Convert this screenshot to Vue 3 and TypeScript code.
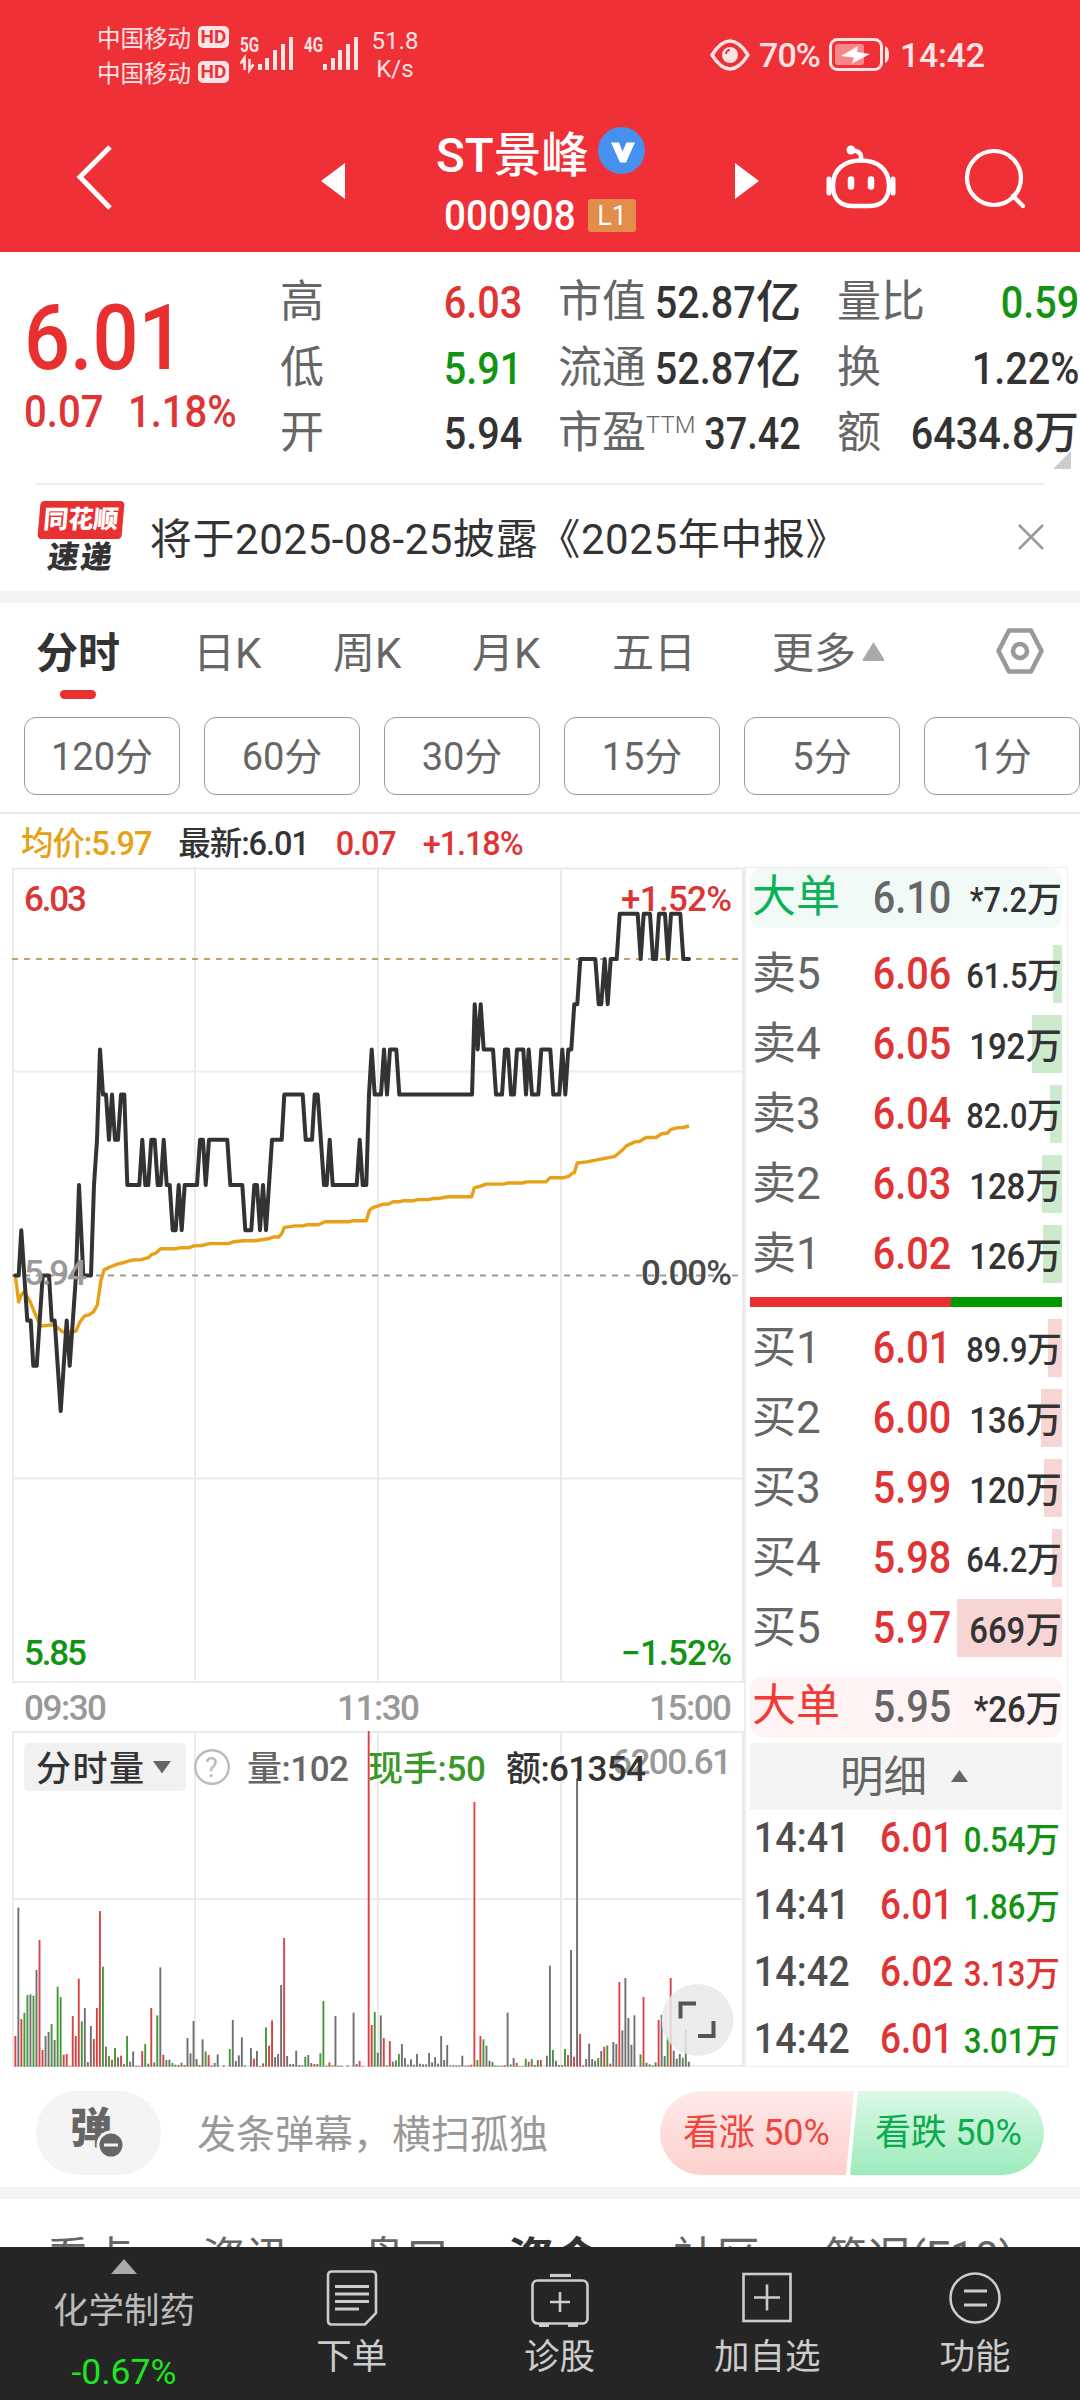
<script setup lang="ts">
type Quote = { k: string; sup?: string; v: string; u?: string; c: string }
type Level = { k: string; p: string; v: string; w: number }
type Point = [number, number]

const left: Quote[] = [
  { k: '高', v: '6.03', c: 'red' },
  { k: '低', v: '5.91', c: 'green' },
  { k: '开', v: '5.94', c: 'dark' },
]
const middle: Quote[] = [
  { k: '市值', v: '52.87', u: '亿', c: 'dark' },
  { k: '流通', v: '52.87', u: '亿', c: 'dark' },
  { k: '市盈', sup: 'TTM', v: '37.42', c: 'dark small' },
]
const right: Quote[] = [
  { k: '量比', v: '0.59', c: 'green' },
  { k: '换', v: '1.22%', c: 'dark' },
  { k: '额', v: '6434.8', u: '万', c: 'dark' },
]
const periods = ['120分', '60分', '30分', '15分', '5分', '1分']
const sells: Level[] = [
  { k: '卖5', p: '6.06', v: '61.5', w: 9 },
  { k: '卖4', p: '6.05', v: '192', w: 30 },
  { k: '卖3', p: '6.04', v: '82.0', w: 12 },
  { k: '卖2', p: '6.03', v: '128', w: 20 },
  { k: '卖1', p: '6.02', v: '126', w: 19 },
]
const buys: Level[] = [
  { k: '买1', p: '6.01', v: '89.9', w: 14 },
  { k: '买2', p: '6.00', v: '136', w: 21 },
  { k: '买3', p: '5.99', v: '120', w: 18 },
  { k: '买4', p: '5.98', v: '64.2', w: 10 },
  { k: '买5', p: '5.97', v: '669', w: 105 },
]
const ticks = [
  { t: '14:41', p: '6.01', v: '0.54', c: 'green' },
  { t: '14:41', p: '6.01', v: '1.86', c: 'green' },
  { t: '14:42', p: '6.02', v: '3.13', c: 'red' },
  { t: '14:42', p: '6.01', v: '3.01', c: 'green' },
]
const isWhole = (v: string) => !v.includes('.')

// Price series: horizontal position in thirds of a pixel, then cents above the previous close.
const price: Point[] = [
  [46, 0], [56, 0], [64, 1], [82, -1], [92, -1], [100, -2], [110, -2], [128, 0], [147, 0], [155, -1], [164, -1],
  [182, -3], [200, -1], [209, -2], [228, 0], [237, 2], [250, 0], [273, 0], [282, 2], [291, 3], [300, 5], [309, 4],
  [318, 4], [327, 3], [336, 4], [345, 3], [354, 3], [363, 4], [373, 4], [382, 2], [418, 2], [427, 3], [436, 2],
  [445, 2], [454, 3], [464, 3], [473, 2], [482, 2], [491, 3], [500, 2], [509, 2], [518, 1], [527, 1], [536, 2],
  [545, 1], [554, 2], [591, 2], [600, 3], [609, 3], [617, 2], [627, 3], [682, 3], [691, 2], [727, 2], [736, 1],
  [754, 1], [763, 2], [771, 2], [780, 1], [789, 2], [798, 1], [816, 3], [845, 3], [853, 4], [908, 4], [917, 3],
  [936, 3], [944, 4], [953, 4], [972, 2], [980, 2], [989, 3], [998, 2], [1070, 2], [1079, 3], [1088, 2], [1099, 2],
  [1107, 4], [1115, 5], [1124, 4], [1143, 4], [1152, 5], [1161, 4], [1170, 5], [1189, 5], [1198, 4], [1416, 4],
  [1424, 6], [1433, 5], [1442, 6], [1451, 5], [1479, 5], [1488, 4], [1506, 4], [1515, 5], [1524, 5], [1533, 4],
  [1542, 4], [1551, 5], [1570, 5], [1578, 4], [1586, 5], [1596, 4], [1615, 4], [1624, 5], [1651, 5], [1660, 4],
  [1678, 4], [1687, 5], [1696, 4], [1705, 5], [1714, 5], [1723, 6], [1732, 6], [1741, 7], [1786, 7], [1796, 6],
  [1804, 6], [1814, 7], [1823, 6], [1832, 7], [1850, 7], [1859, 8], [1913, 8], [1922, 7], [1931, 8], [1950, 8],
  [1959, 7], [1968, 7], [1977, 8], [1995, 8], [2004, 7], [2013, 8], [2041, 8], [2050, 7], [2067, 7],
]
const average: Point[] = [
  [46, 1123], [56, 1195], [64, 1175], [73, 1167], [82, 1180], [91, 1195], [100, 1215], [112, 1240], [122, 1260],
  [150, 1257], [164, 1256], [175, 1266], [190, 1276], [210, 1276], [228, 1273], [240, 1248], [254, 1232],
  [266, 1230], [280, 1222], [292, 1203], [302, 1140], [312, 1108], [330, 1100], [350, 1093], [372, 1088],
  [382, 1085], [400, 1081], [420, 1081], [445, 1075], [455, 1066], [467, 1063], [482, 1051], [527, 1051],
  [540, 1048], [568, 1048], [582, 1043], [604, 1042], [630, 1037], [684, 1037], [700, 1032], [730, 1029],
  [765, 1029], [805, 1024], [820, 1019], [836, 1019], [845, 1010], [853, 993], [872, 991], [885, 989], [908, 989],
  [920, 986], [955, 986], [975, 978], [1045, 978], [1060, 975], [1099, 975], [1108, 948], [1117, 940],
  [1150, 930], [1165, 930], [1180, 924], [1198, 924], [1210, 921], [1240, 921], [1255, 918], [1285, 918],
  [1300, 915], [1315, 915], [1345, 910], [1415, 910], [1423, 886], [1440, 882], [1458, 876], [1510, 876],
  [1525, 873], [1568, 873], [1580, 870], [1638, 870], [1650, 859], [1688, 859], [1706, 855], [1715, 848],
  [1723, 845], [1732, 819], [1760, 816], [1845, 801], [1866, 785], [1880, 772], [1905, 762], [1918, 761],
  [1938, 750], [1968, 750], [1985, 740], [2003, 738], [2013, 728], [2030, 724], [2048, 723], [2067, 719],
]
const priceLine = price.map(([x, n]) => `${(x / 3).toFixed(1)},${(1275.4 - n * 45.2).toFixed(1)}`).join(' ')
const averageLine = average.map(([x, y]) => `${(x / 3).toFixed(1)},${(860 + y / 2.703).toFixed(1)}`).join(' ')

// One entry per minute: bar height in thirds of a pixel and its colour; 0 leaves the minute empty.
const volumeData =
  '92r 477k 143r 162g 215g 217k 213g 290k 380r 50r 92k 104k 128g 80k 240g 209g 36r 38r 3g 152r 92r 264r 136g 176k 14k 122k 83r 176r 467r 300g ' +
  '60k 32g 21r 56g 28k 33r 8k 92g 15k 46k 3k 3k 47r 68g 9k 176r 13k 154g 298k 36r 20g 21k 11g 6k 5r 12g 5r 86k 40k 137k ' +
  '23k 5r 82k 46g 35r 4k 11k 37k 0k 4k 0k 53g 140k 17k 34k 88k 4g 0k 56k 24r 47k 2g 10r 118g 63r 139r 29k 38k 245k 386r ' +
  '32k 8k 8k 48k 5k 4k 30g 35k 11k 8r 8k 40g 197g 3k 13r 4g 152k 3k 3k 0k 4k 0k 162k 8k 17r 2g 0k 1007r 125r 164g 42k ' +
  '154k 86r 4g 77r 15k 19k 38g 68k 26k 6k 22k 6k 38k 9k 7k 7k 41k 13k 29k 9k 92k 20k 65k 4k 4k 4k 4k 33k 3k 4k ' +
  '6r 794r 20g 92r 82g 63k 18k 14k 4g 3k 3k 5r 162k 7g 26k 12r 2k 2k 24g 15r 23g 5k 20k 20r 0k 33k 303k 50g 18k 5k ' +
  '5g 53g 35r 350k 30r 865k 98r 4k 23k 69k 23k 18k 26g 47k 60r 64g 9r 74k 68k 254r 109k 266k 146k 66k 154k 0k 37g 209r 12k 7k ' +
  '4g 13k 140r 156k 32k 90g 266r 48k 24k 38k 27g 112k 15k'
const tones: Record<string, string> = { r: '#d84444', g: '#45983a', k: '#707070' }
const volumes = volumeData.split(' ').map((s, i) => ({
  x: 14.4 + i * 3.02,
  h: parseInt(s) / 3,
  fill: tones[s.slice(-1)],
}))
</script>

<template>
  <div class="app">
    <header class="top">
      <div class="status">
        <div class="carriers">
          <div class="carrier">中国移动<b>HD</b></div>
          <div class="carrier">中国移动<b>HD</b></div>
        </div>
        <svg class="signals" width="122" height="40" viewBox="0 0 122 40" fill="#fde4e5">
          <text x="0" y="17" font-size="21" font-weight="700" textLength="19" lengthAdjust="spacingAndGlyphs">5G</text>
          <path d="M4.500 35V23L.5 28.500M9.500 24v11l4-5.500" stroke="#fde4e5" stroke-width="2.600" fill="none" />
          <path d="M18 29h4v6h-4zM25 23h4v12h-4zM33 15h4v20h-4zM41 9h4v26h-4zM49 2h4v33h-4z" />
          <text x="64" y="17" font-size="21" font-weight="700" textLength="19" lengthAdjust="spacingAndGlyphs">4G</text>
          <path d="M83 29h4v6h-4zM91 23h4v12h-4zM98 15h4v20h-4zM106 9h4v26h-4zM114 2h4v33h-4z" />
        </svg>
        <div class="speed"><span>51.8</span><span>K/s</span></div>
        <svg class="eye" width="40" height="32" viewBox="0 0 40 32" fill="none" stroke="#fde4e5">
          <path d="M2 16C9 5 15 2 20 2s11 3 18 14C31 27 25 30 20 30S9 27 2 16z" stroke-width="3.4" stroke-linejoin="round" />
          <circle cx="20" cy="16" r="8" fill="#fde4e5" stroke="none" />
          <path d="M16 15a4 4 0 0 1 4-4" stroke="#f03037" stroke-width="2" />
        </svg>
        <span class="pct">70%</span>
        <svg class="battery" width="62" height="33" viewBox="0 0 62 33">
          <rect x="1.5" y="1.5" width="51" height="30" rx="7" fill="none" stroke="#fde4e5" stroke-width="3" />
          <rect x="6" y="6" width="29" height="21" rx="3" fill="#f8878b" />
          <path d="M56 8q4 1 4 8.500t-4 8.500z" fill="#fde4e5" />
          <path d="M29 8 12 18l13 1.500-2 6L41 16l-13-2z" fill="#fff" />
        </svg>
        <span class="clock">14:42</span>
      </div>
      <div class="bar">
        <svg class="back" width="40" height="68" viewBox="0 0 40 68"><path d="M35 4 5 34l30 31" fill="none" stroke="#fff" stroke-width="5" /></svg>
        <svg class="prev" width="24" height="36" viewBox="0 0 24 36"><path d="M24 0v36L0 18z" fill="#fff" /></svg>
        <div class="title">
          <div class="name">
            <span>ST景峰</span>
            <svg width="47" height="47" viewBox="0 0 47 47">
              <circle cx="23.500" cy="23.500" r="23.500" fill="#4690ee" />
              <path d="M13 15.500h8l3.500 9 4-9h8.500l-9 20h-6z" fill="#fff" />
            </svg>
          </div>
          <div class="code"><span class="digits">000908</span><i>L1</i></div>
        </div>
        <svg class="next" width="24" height="36" viewBox="0 0 24 36"><path d="M0 0v36l24-18z" fill="#fff" /></svg>
        <svg class="robot" width="72" height="66" viewBox="0 0 72 66" fill="none" stroke="#fff">
          <path d="M36 17V12q-1-5-9-6" stroke-width="4.500" />
          <circle cx="26" cy="6" r="4.500" fill="#fff" stroke="none" />
          <path d="M36 16.500c17 0 28 9 28 25 0 13-7 20.500-20 20.500H28C15 62 8 54.500 8 41.500c0-16 11-25 28-25z" stroke-width="4.500" />
          <path d="M4 35v14M68 35v14" stroke-width="5" stroke-linecap="round" />
          <path d="M26 35.500v7M46 35.500v7" stroke-width="6.500" stroke-linecap="round" />
        </svg>
        <svg class="search" width="64" height="64" viewBox="0 0 64 64" fill="none" stroke="#fff" stroke-width="4.200">
          <circle cx="30" cy="31" r="27" />
          <path d="m49 49 10 10" stroke-linecap="round" />
        </svg>
      </div>
    </header>

    <section class="quote">
      <div class="last">
        <div class="big">6.01</div>
        <div class="chg"><span>0.07</span><span>1.18%</span></div>
      </div>
      <div v-for="(col, ci) in [left, middle, right]" :key="ci" class="col" :class="'col' + ci">
        <div v-for="q in col" :key="q.k" class="pair">
          <span class="key">{{ q.k }}<sup v-if="q.sup">{{ q.sup }}</sup></span>
          <span class="val" :class="q.c"><span class="n">{{ q.v }}</span>{{ q.u }}</span>
        </div>
      </div>
      <svg class="fold" width="18" height="18" viewBox="0 0 18 18"><path d="M18 0v18H0z" fill="#ccc" /></svg>
    </section>

    <section class="news">
      <div class="logo"><b>同花顺</b><i>速递</i></div>
      <p>将于2025-08-25披露《2025年中报》</p>
      <svg width="26" height="26" viewBox="0 0 26 26"><path d="m1 1 24 24M25 1 1 25" stroke="#999" stroke-width="2.500" /></svg>
    </section>

    <nav class="tabs">
      <span class="t1 on">分时</span>
      <span class="t2">日K</span>
      <span class="t3">周K</span>
      <span class="t4">月K</span>
      <span class="t5">五日</span>
      <span class="t6">更多<svg width="23" height="19" viewBox="0 0 23 19"><path d="M11.500 0 22 17q1 2-1 2H2q-2 0-1-2z" fill="#aaa" /></svg></span>
      <svg class="hex" width="50" height="48" viewBox="0 0 50 48" fill="none" stroke="#999">
        <path d="M14 3.500h22L46.500 24 36 44.500H14L3.500 24z" stroke-width="4.500" stroke-linejoin="round" />
        <circle cx="25" cy="24" r="7" stroke-width="4.500" />
      </svg>
    </nav>
    <div class="periods"><span v-for="p in periods" :key="p">{{ p }}</span></div>

    <div class="legend">
      <span class="gold">均价:5.97</span><span class="dark">最新:6.01</span><span class="red">0.07</span><span class="red">+1.18%</span>
    </div>

    <section class="market">
      <svg class="chart" width="744" height="1201" viewBox="0 867 744 1201">
        <g stroke="#ebebeb" stroke-width="2" fill="none">
          <path d="M13 868.500H743V1682H13zM195 868.500V1682M378 868.500V1682M561 868.500V1682M13 1071.500H743M13 1478.500H743" />
          <path d="M13 1732H743V2066H13zM195 1732V2066M378 1732V2066M561 1732V2066M13 1899H743" />
        </g>
        <path d="M12 959H742" stroke="#c2a06a" stroke-width="1.800" stroke-dasharray="6 6" />
        <path d="M12 1275.500H742" stroke="#999" stroke-width="1.800" stroke-dasharray="6 6" />
        <polyline :points="averageLine" fill="none" stroke="#e6a117" stroke-width="3.400" stroke-linejoin="round" />
        <polyline :points="priceLine" fill="none" stroke="#333" stroke-width="4" stroke-linejoin="round" stroke-linecap="round" />
        <g class="lbl">
          <text x="24" y="1285" fill="#999" textLength="63">5.94</text>
          <text x="641" y="1285" fill="#4a4a4a" textLength="91">0.00%</text>
          <text x="24" y="911" fill="#dc3535" textLength="63">6.03</text>
          <text x="621" y="911" fill="#dc3535" textLength="111">+1.52%</text>
          <text x="24" y="1665" fill="#129312" textLength="63">5.85</text>
          <text x="621" y="1665" fill="#129312" textLength="111">−1.52%</text>
          <g fill="#999">
            <text x="24" y="1720" textLength="83">09:30</text>
            <text x="337" y="1720" textLength="83">11:30</text>
            <text x="649" y="1720" textLength="83">15:00</text>
            <text x="612" y="1774" textLength="120">6200.61</text>
          </g>
        </g>
        <rect x="24" y="1743" width="162" height="48" rx="5" fill="#f1f1f1" />
        <path d="M153 1761h18l-9 12.500z" fill="#666" />
        <circle cx="212" cy="1767" r="16.800" fill="none" stroke="#bbb" stroke-width="2.400" />
        <text x="205" y="1776.500" font-size="27" fill="#bbb">?</text>
        <rect v-for="(b, i) in volumes" :key="i" :x="b.x" :y="2066.700 - b.h" width="1.900" :height="b.h" :fill="b.fill" />
        <g class="lbl">
          <text x="36" y="1780.500" fill="#333" textLength="108">分时量</text>
          <text x="247" y="1780.500" fill="#666" textLength="102">量:102</text>
          <text x="368" y="1780.500" fill="#3a972a" textLength="118">现手:50</text>
          <text x="506" y="1780.500" fill="#333" textLength="140">额:61354</text>
        </g>
        <circle cx="697.500" cy="2020" r="36" fill="#e9e9e9" fill-opacity=".85" />
        <path d="M680.500 2018.500v-15h15.500M713.500 2021v15h-15.500" fill="none" stroke="#555" stroke-width="4" />
      </svg>

      <div class="book">
        <div class="big-order sell"><span class="key">大单</span><span class="p"><span class="n">6.10</span></span><span class="v"><span class="n">*7.2</span>万</span></div>
        <div class="rows">
          <div v-for="r in sells" :key="r.k" class="level">
            <i class="green-bg" :style="{ width: r.w + 'px' }"></i>
            <span class="key">{{ r.k }}</span><span class="p"><span class="n">{{ r.p }}</span></span><span class="v" :class="{ whole: isWhole(r.v) }"><span class="n">{{ r.v }}</span>万</span>
          </div>
        </div>
        <div class="ratio"><i></i></div>
        <div class="rows">
          <div v-for="r in buys" :key="r.k" class="level">
            <i class="red-bg" :style="{ width: r.w + 'px' }"></i>
            <span class="key">{{ r.k }}</span><span class="p"><span class="n">{{ r.p }}</span></span><span class="v" :class="{ whole: isWhole(r.v) }"><span class="n">{{ r.v }}</span>万</span>
          </div>
        </div>
        <div class="big-order buy"><span class="key">大单</span><span class="p"><span class="n">5.95</span></span><span class="v whole"><span class="n">*26</span>万</span></div>
        <div class="detail">明细<svg width="17" height="12" viewBox="0 0 17 12"><path d="M8.500 0 17 12H0z" fill="#666" /></svg></div>
        <div class="ticks">
          <div v-for="(t, i) in ticks" :key="i" class="tick">
            <span class="time">{{ t.t }}</span><span class="p"><span class="n">{{ t.p }}</span></span><span class="v" :class="t.c"><span class="n">{{ t.v }}</span>万</span>
          </div>
        </div>
      </div>
    </section>

    <section class="danmu">
      <div class="toggle">
        弹
        <svg width="30" height="30" viewBox="0 0 30 30"><circle cx="15" cy="15" r="13" fill="#666" stroke="#f4f4f4" stroke-width="3" /><path d="M8 15h14" stroke="#f4f4f4" stroke-width="3" /></svg>
      </div>
      <span class="hint">发条弹幕，横扫孤独</span>
      <div class="votes"><span class="up">看涨 50%</span><span class="down">看跌 50%</span></div>
    </section>

    <nav class="sections">
      <span class="s1">看点</span><span class="s2">资讯</span><span class="s3">盘口</span><span class="s4">资金</span><span class="s5">社区</span><span class="s6">简况(F10)</span>
    </nav>

    <footer class="dock">
      <div class="sector">
        <svg width="26" height="15" viewBox="0 0 26 15"><path d="M13 0 26 15H0z" fill="#aaa" /></svg>
        <span>化学制药</span>
        <b>-0.67%</b>
      </div>
      <div class="item">
        <svg width="60" height="58" viewBox="0 0 60 58" fill="none" stroke="#ccc" stroke-width="2.600">
          <path d="M10 2.500h40q4 0 4 4V44L43 55.500H10q-4 0-4-4v-45q0-4 4-4z" />
          <path d="M13 17.500h34M13 25h34M13 32.500h34M13 40h24" stroke-width="3" />
        </svg>
        <span>下单</span>
      </div>
      <div class="item">
        <svg width="60" height="58" viewBox="0 0 60 58" fill="none" stroke="#ccc" stroke-width="2.600">
          <rect x="2.500" y="11.500" width="55" height="43" rx="5" />
          <path d="M20 6.500h21" stroke-width="3.200" /><path d="M9 56.500h10M38 56.500h10" stroke-width="3.200" />
          <path d="M20 33h20M30 23v20" />
        </svg>
        <span>诊股</span>
      </div>
      <div class="item">
        <svg width="60" height="58" viewBox="0 0 60 58" fill="none" stroke="#ccc" stroke-width="2.600">
          <rect x="6.500" y="5" width="47" height="47" />
          <path d="M17 28.500h26M30 15.500v26" />
        </svg>
        <span>加自选</span>
      </div>
      <div class="item">
        <svg width="60" height="58" viewBox="0 0 60 58" fill="none" stroke="#ccc" stroke-width="2.600">
          <circle cx="30" cy="29" r="24.500" />
          <path d="M19 22h23M19 36h23" stroke-width="3" />
        </svg>
        <span>功能</span>
      </div>
    </footer>
  </div>
</template>

<style>
body {
  background: #fff;
}
</style>

<style scoped>
.app {
  width: 1080px;
  height: 2400px;
  overflow: hidden;
  display: flex;
  flex-direction: column;
  background: #fff;
  color: #333;
  font-family: Roboto, 'Noto Sans CJK SC', sans-serif;
}
.app > * {
  flex: none;
}
svg {
  display: block;
  flex: none;
}
i {
  font-style: normal;
}
.red { color: #e03434; }
.green { color: #129312; }
.dark { color: #333; }
.gold { color: #e6a117; }
.n {
  display: inline-block;
  transform: scaleX(0.88);
  transform-origin: right;
}

/* header */
.top {
  height: 252px;
  background: #f03037;
  color: #fde4e5;
}
.status {
  display: flex;
  height: 110px;
  box-sizing: border-box;
  padding: 19px 0 0 97px;
}
.carriers {
  width: 143px;
}
.carrier {
  display: flex;
  align-items: center;
  height: 35px;
  font-size: 23.5px;
}
.carrier b {
  width: 31px;
  margin-left: 7px;
  border-radius: 5px;
  background: #fde4e5;
  color: #f03037;
  font-size: 19px;
  line-height: 22px;
  text-align: center;
}
.signals {
  margin-top: 16px;
}
.speed {
  display: flex;
  flex-direction: column;
  width: 66px;
  align-items: center;
  font-size: 24px;
  line-height: 28px;
  padding-top: 8px;
}
.eye {
  margin: 20px 0 0 282px;
}
.pct,
.clock {
  margin-top: 16px;
  font-size: 34px;
  font-weight: 500;
  line-height: 40px;
}
.pct {
  width: 70px;
  padding-left: 9px;
  letter-spacing: -0.9px;
}
.battery {
  margin-top: 19px;
}
.clock {
  margin-left: 9px;
  letter-spacing: -0.3px;
}
.bar {
  display: flex;
  height: 142px;
}
.back { margin: 33px 0 0 75px; }
.prev { margin: 53px 0 0 206px; }
.title {
  display: flex;
  flex-direction: column;
  width: 216px;
  margin: 0 0 0 90px;
  padding-top: 11px;
  color: #fff;
}
.name {
  display: flex;
  align-items: center;
  gap: 9px;
  height: 60px;
  padding-left: 1px;
  font-size: 47.5px;
  font-weight: 500;
  white-space: nowrap;
}
.name svg { margin-top: -2px; }
.code {
  display: flex;
  align-items: center;
  height: 68px;
  padding-left: 9px;
  font-size: 42px;
  font-weight: 500;
}
.digits {
  width: 144px;
  transform: scaleX(0.92);
  transform-origin: left;
}
.code i {
  width: 48px;
  height: 33px;
  border-radius: 3px;
  background: #e38d4a;
  font-size: 27px;
  font-weight: 400;
  line-height: 34px;
  text-align: center;
}
.next { margin: 53px 0 0 84px; }
.robot { margin: 34px 0 0 66px; }
.search { margin: 37px 0 0 67px; }

/* quote */
.quote {
  display: flex;
  position: relative;
  height: 231px;
  box-sizing: border-box;
  padding-top: 18px;
}
.last {
  width: 280px;
  box-sizing: border-box;
  padding-left: 24px;
  color: #e03434;
}
.big {
  height: 76px;
  margin-top: 31px;
  font-size: 90px;
  font-weight: 500;
  line-height: 76px;
  color: #e93030;
  transform: scaleX(0.9);
  transform-origin: left;
}
.chg {
  display: flex;
  gap: 27px;
  width: 240px;
  height: 60px;
  font-size: 44px;
  font-weight: 500;
  line-height: 60px;
  padding-top: 5px;
  transform: scaleX(0.91);
  transform-origin: left;
}
.col0 { width: 242px; }
.col1 { width: 243px; margin-left: 36px; }
.col2 { width: 242px; margin-left: 36px; }
.pair {
  display: flex;
  justify-content: space-between;
  height: 65.7px;
  line-height: 65.7px;
  white-space: nowrap;
}
.pair .key {
  color: #666;
  font-size: 44px;
}
.pair sup {
  font-size: 24px;
  font-weight: 300;
  line-height: 0;
  vertical-align: 15px;
}
.pair .val {
  display: flex;
  justify-content: flex-end;
  width: 0;
  font-size: 45px;
  font-weight: 500;
}
.pair .small .n { transform: scaleX(0.84); }
.fold {
  position: absolute;
  right: 9px;
  bottom: 14px;
}

/* news */
.news {
  display: flex;
  height: 108px;
  margin: 0 36px;
  box-sizing: border-box;
  border-top: 2px solid #eee;
  align-items: center;
}
.news p {
  margin: -5px 0 0;
  width: 870px;
  font-size: 42px;
  white-space: nowrap;
  letter-spacing: 0.6px;
}
.news > svg { margin-top: -2px; }
.logo {
  width: 84px;
  margin: 0 27px 0 3px;
}
.logo b,
.logo i {
  display: block;
  font-weight: 900;
  transform: skewX(-5deg);
}
.logo b {
  height: 38px;
  border-radius: 4px;
  background: #e93030;
  color: #fff;
  font-size: 25px;
  line-height: 38px;
  text-align: center;
}
.logo i {
  padding-left: 9px;
  color: #333;
  font-size: 31px;
  line-height: 37px;
  letter-spacing: 2px;
  transform: skewX(-8deg);
}

/* tabs */
.tabs {
  display: flex;
  height: 111px;
  box-sizing: border-box;
  border-top: 12px solid #f4f4f4;
  padding-left: 36px;
  color: #666;
  font-size: 42px;
  line-height: 101px;
}
.tabs span { flex: none; }
.t1 { width: 157px; }
.t2 { width: 140px; }
.t3 { width: 139px; }
.t4 { width: 140px; }
.t5 { width: 160px; }
.t6 { width: 223px; display: flex; }
.t6 svg { margin: 39px 0 0 6px; }
.on {
  color: #333;
  font-weight: 700;
  position: relative;
}
.on::after {
  content: '';
  position: absolute;
  left: 24px;
  top: 87px;
  width: 36px;
  height: 9px;
  border-radius: 5px;
  background: #e93030;
}
.hex { margin-top: 24px; }
.periods {
  display: flex;
  gap: 24px;
  height: 112px;
  box-sizing: border-box;
  padding: 15px 0 0 24px;
  border-bottom: 2px solid #e8e8e8;
}
.periods span {
  width: 154px;
  height: 76px;
  flex: none;
  border: 1px solid #999;
  border-radius: 12px;
  color: #666;
  font-size: 38px;
  line-height: 79px;
  text-align: center;
}
.legend {
  display: flex;
  height: 53px;
  padding-left: 21px;
  gap: 27px;
  font-size: 32.5px;
  font-weight: 500;
  letter-spacing: -1.1px;
  line-height: 60px;
}

/* market */
.market {
  display: flex;
  height: 1200px;
}
.lbl {
  font-size: 35px;
  font-weight: 500;
}
.book {
  display: flex;
  flex-direction: column;
  width: 324px;
  box-sizing: border-box;
  border: solid #eee;
  border-width: 1px 1px 1px 2px;
  padding: 0 5px 0 4px;
}
.big-order,
.level,
.tick {
  display: flex;
  position: relative;
  padding-left: 2px;
  white-space: nowrap;
}
.big-order {
  height: 60px;
  border-radius: 12px;
  line-height: 59px;
}
.sell { background: #f1faf6; }
.sell .key { color: #0bb258; }
.buy { margin-top: 14px; background: #fff3f3; }
.buy .key { color: #f03c36; }
.rows { margin-top: 11px; }
.level {
  height: 70px;
  line-height: 70px;
}
.level i {
  position: absolute;
  right: 0;
  top: 6px;
  height: 58px;
}
.green-bg { background: #cdeacd; }
.red-bg { background: #f8d5d5; }
.book .key {
  width: 97px;
  font-size: 44px;
}
.level .key { color: #666; }
.book .p {
  width: 102px;
  font-size: 45px;
  font-weight: 500;
  color: #e03434;
  text-align: right;
}
.book .big-order .p { color: #666; }
.book .v {
  position: relative;
  flex: 1;
  font-size: 35px;
  font-weight: 500;
  text-align: right;
  padding-top: 3px;
}
.book .whole { font-size: 36.5px; }
.whole .n { transform: scaleX(0.9); }
.ratio {
  height: 10px;
  margin: 8px 0 -5px;
  background: #009900;
}
.ratio i {
  display: block;
  width: 201px;
  height: 10px;
  background: #e93030;
}
.detail {
  display: flex;
  height: 67px;
  margin-top: 6px;
  padding-left: 90px;
  background: #f4f4f4;
  color: #666;
  font-size: 43.5px;
  line-height: 70px;
}
.detail svg { margin: 27px 0 0 24px; }
.ticks { margin-top: -9px; }
.tick {
  height: 67px;
  line-height: 73px;
}
.tick .time {
  width: 96px;
  font-size: 42.5px;
  font-weight: 500;
  color: #4e4e4e;
  transform: scaleX(0.89);
  transform-origin: left;
  padding-left: 2px;
}
.book .tick .p { font-size: 42px; width: 103px; }
.book .tick .v { font-size: 34.5px; padding-right: 2px; }
.tick .v .n { transform: scaleX(0.9); }

/* comments */
.danmu {
  display: flex;
  height: 132px;
  box-sizing: border-box;
  border-bottom: 12px solid #f4f4f4;
  padding: 24px 36px 0;
}
.toggle {
  position: relative;
  width: 125px;
  height: 84px;
  border-radius: 42px;
  background: #f4f4f4;
  box-sizing: border-box;
  padding-left: 34px;
  color: #666;
  font-size: 42px;
  font-weight: 900;
  line-height: 76px;
}
.toggle svg {
  position: absolute;
  left: 60px;
  top: 39px;
}
.hint {
  width: 499px;
  box-sizing: border-box;
  padding-left: 36px;
  color: #999;
  font-size: 39px;
  line-height: 89px;
}
.votes {
  display: flex;
  width: 384px;
  height: 84px;
  border-radius: 42px;
  overflow: hidden;
  font-size: 36px;
  line-height: 84px;
  letter-spacing: -0.2px;
}
.votes span { box-sizing: border-box; white-space: pre; }
.up {
  width: 198px;
  padding-left: 23px;
  color: #f04640;
  background: linear-gradient(#feeaea, #fdd0cb);
  clip-path: polygon(0 0, 194px 0, 186px 100%, 0 100%);
}
.down {
  width: 194px;
  margin-left: -8px;
  padding-left: 25px;
  color: #0bab4e;
  background: linear-gradient(#dcf9e7, #9cebbb);
  clip-path: polygon(8px 0, 100% 0, 100% 100%, 0 100%);
}

.sections {
  display: flex;
  height: 48px;
  overflow: hidden;
  padding-left: 46px;
  color: #666;
  font-size: 43.5px;
  line-height: 120px;
  white-space: nowrap;
}
.s1 { width: 156px; }
.s2 { width: 160px; }
.s3 { width: 146px; }
.s4 { width: 165px; font-size: 46px; font-weight: 700; color: #333; }
.s5 { width: 151px; }

.dock {
  display: flex;
  height: 153px;
  background: #252525;
  color: #ccc;
  font-size: 35.5px;
}
.sector {
  display: flex;
  flex-direction: column;
  align-items: center;
  width: 248px;
  padding-top: 12px;
  box-sizing: border-box;
  color: #bbb;
}
.sector span { line-height: 50px; margin-top: 12px; }
.sector b { color: #1ee61e; font-weight: 400; line-height: 50px; margin-top: 11px; }
.item {
  display: flex;
  flex-direction: column;
  align-items: center;
  width: 207.7px;
  padding-top: 22px;
  box-sizing: border-box;
}
.item span { line-height: 50px; margin-top: 5px; }
</style>
